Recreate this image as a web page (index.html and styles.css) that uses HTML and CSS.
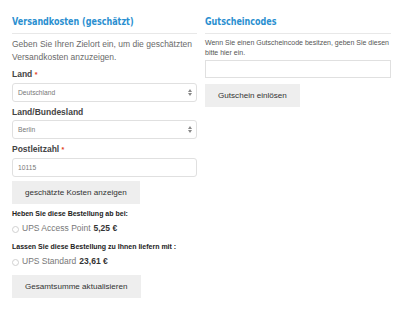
FILE: index.html
```html
<!DOCTYPE html>
<html lang="de">
<head>
  <meta charset="UTF-8" />
  <meta name="viewport" content="width=device-width, initial-scale=1.0"/>
  <title>Warenkorb</title>
  <link rel="stylesheet" href="styles.css">
</head>
<body>
  <div class="cart-totals">
    <div class="col">
      <h2><span>Versandkosten (geschätzt)</span></h2>
      <p class="intro">Geben Sie Ihren Zielort ein, um die geschätzten Versandkosten anzuzeigen.</p>

      <label class="field-label">Land <span class="req">*</span></label>
      <div class="select">Deutschland
        <svg class="arrows" width="4" height="7" viewBox="0 0 4 7"><path d="M0 3L2 0L4 3ZM0 4L2 7L4 4Z" fill="#888"/></svg>
      </div>

      <label class="field-label">Land/Bundesland</label>
      <div class="select">Berlin
        <svg class="arrows" width="4" height="7" viewBox="0 0 4 7"><path d="M0 3L2 0L4 3ZM0 4L2 7L4 4Z" fill="#888"/></svg>
      </div>

      <label class="field-label">Postleitzahl <span class="req">*</span></label>
      <div class="select">10115</div>

      <button class="btn">geschätzte Kosten anzeigen</button>

      <div class="ship-title">Heben Sie diese Bestellung ab bei:</div>
      <label class="ship-option"><span class="radio"></span> UPS Access Point <strong>5,25 €</strong></label>

      <div class="ship-title">Lassen Sie diese Bestellung zu Ihnen liefern mit :</div>
      <label class="ship-option"><span class="radio"></span> UPS Standard <strong>23,61 €</strong></label>

      <button class="btn btn-update">Gesamtsumme aktualisieren</button>
    </div>

    <div class="col">
      <h2><span>Gutscheincodes</span></h2>
      <p class="coupon-text">Wenn Sie einen Gutscheincode besitzen, geben Sie diesen bitte hier ein.</p>
      <div class="select coupon-input"></div>
      <button class="btn">Gutschein einlösen</button>
    </div>
  </div>
</body>
</html>
```

FILE: styles.css
```css
body {
  font-family: "Liberation Sans", Arial, sans-serif;
  margin: 0;
  padding: 0 9px 0 12px;
  background: #fff;
  color: #6a6a6a;
}
.cart-totals {
  display: grid;
  grid-template-columns: 185px 186px;
  column-gap: 8px;
  padding-top: 15px;
}
h2 {
  font-family: "DejaVu Sans", sans-serif;
  font-weight: bold;
  font-size: 11px;
  line-height: 14px;
  color: #2a8fd0;
  margin: 0;
  padding-bottom: 4px;
  border-bottom: 1px solid #e8e8e8;
  white-space: nowrap;
}
h2 span {
  display: inline-block;
  transform: scaleX(0.73);
  transform-origin: left center;
}
.intro {
  font-size: 8.5px;
  line-height: 13px;
  margin: 4px 0 4px;
}
.field-label {
  display: block;
  font-size: 8.5px;
  line-height: 12px;
  font-weight: bold;
  color: #444;
  margin-bottom: 2px;
}
.req {
  color: #e2401c;
  font-size: 7px;
}
.select {
  display: flex;
  justify-content: space-between;
  align-items: center;
  box-sizing: border-box;
  width: 100%;
  height: 19px;
  border: 1px solid #e0e0e0;
  border-radius: 3px;
  padding: 0 4px 0 5px;
  font-size: 6.7px;
  color: #777;
  margin-bottom: 4px;
  background: #fff;
}
.btn {
  display: block;
  border: none;
  background: #eeeeee;
  font-family: "Liberation Sans", Arial, sans-serif;
  font-size: 8.1px;
  color: #333;
  padding: 0 13px;
  height: 23px;
  margin: 4px 0 5px;
}
.ship-title {
  font-size: 7px;
  line-height: 10px;
  font-weight: bold;
  color: #222;
}
.ship-option {
  display: flex;
  align-items: center;
  gap: 3px;
  font-size: 8.5px;
  line-height: 12px;
  color: #777;
  margin: 3px 0 8px;
}
.ship-option strong {
  color: #333;
}
.radio {
  width: 5px;
  height: 5px;
  border: 1px solid #d0d0d0;
  border-radius: 50%;
  margin-top: 2px;
}
.btn-update {
  margin-top: 6px;
}
.coupon-text {
  font-size: 7px;
  line-height: 10px;
  margin: 4px 0 2px;
  color: #555;
}
.coupon-input {
  height: 18px;
  border-radius: 0;
  margin-bottom: 0;
}
.col .coupon-input + .btn {
  margin-top: 6px;
}
```
